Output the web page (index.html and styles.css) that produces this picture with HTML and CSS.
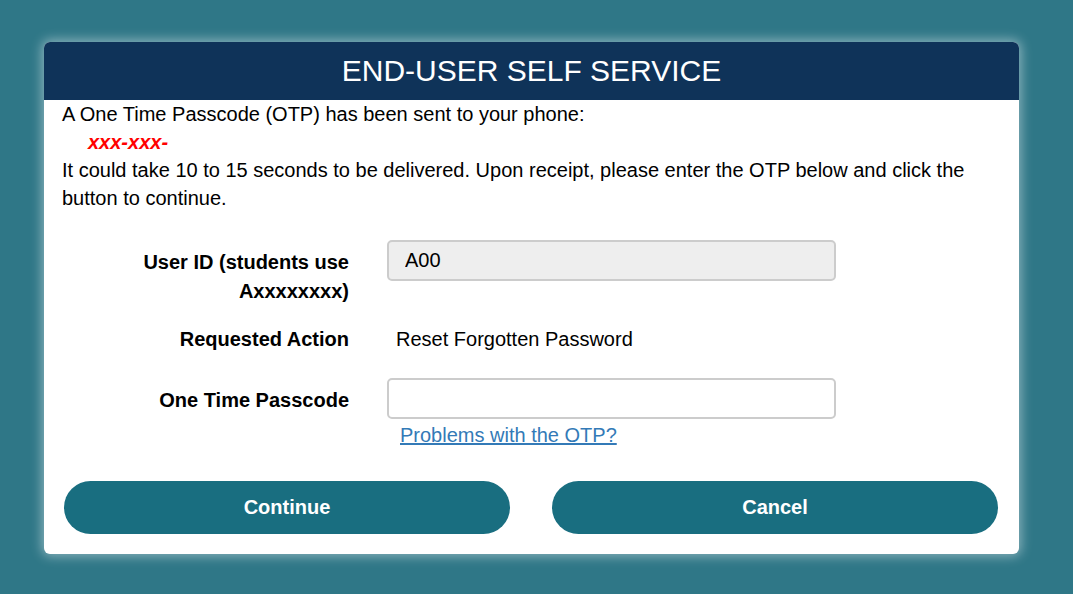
FILE: index.html
```html
<!DOCTYPE html>
<html>
<head>
<meta charset="utf-8">
<link rel="stylesheet" href="styles.css">
</head>
<body>
<div class="page">
  <div class="card">
    <div class="card-header">END-USER SELF SERVICE</div>
    <div class="card-body">
      <p class="msg">A One Time Passcode (OTP) has been sent to your phone:</p>
      <p class="phone">xxx-xxx-</p>
      <p class="msg">It could take 10 to 15 seconds to be delivered. Upon receipt, please enter the OTP below and click the button to continue.</p>
      <div class="form">
        <div class="row">
          <div class="label">User ID (students use Axxxxxxxx)</div>
          <div class="field"><input class="input readonly" type="text" value="A00" readonly></div>
        </div>
        <div class="row row-action">
          <div class="label">Requested Action</div>
          <div class="field value">Reset Forgotten Password</div>
        </div>
        <div class="row row-otp">
          <div class="label">One Time Passcode</div>
          <div class="field">
            <input class="input" type="text">
            <a class="link" href="#">Problems with the OTP?</a>
          </div>
        </div>
      </div>
      <div class="buttons">
        <button class="btn">Continue</button>
        <button class="btn">Cancel</button>
      </div>
    </div>
  </div>
</div>
</body>
</html>
```
FILE: styles.css
```css
html, body {
  margin: 0;
  padding: 0;
  height: 100%;
}
body {
  background: #2f7787;
  font-family: "Liberation Sans", Arial, sans-serif;
  color: #000;
}
.page {
  padding: 42px 54px 0 44px;
}
.card {
  width: 975px;
  background: #fff;
  border-radius: 6px;
  box-shadow: 0 0 12px 2px rgba(255,255,255,0.45);
  overflow: hidden;
}
.card-header {
  background: #0f3359;
  color: #fff;
  height: 58px;
  line-height: 58px;
  text-align: center;
  font-size: 30px;
}
.card-body {
  padding: 0 18px 20px 18px;
}
.msg {
  margin: 0;
  font-size: 20px;
  line-height: 28px;
}
.phone {
  margin: 0;
  padding-left: 26px;
  font-size: 20px;
  line-height: 28px;
  color: #f00;
  font-weight: bold;
  font-style: italic;
}
.form {
  margin-top: 28px;
}
.row {
  display: grid;
  grid-template-columns: 287px 448px;
  column-gap: 38px;
  align-items: start;
}
.label {
  text-align: right;
  font-weight: bold;
  font-size: 20px;
  line-height: 29px;
  padding-left: 60px;
  padding-top: 8px;
}
.input {
  display: block;
  box-sizing: border-box;
  width: 449px;
  height: 41px;
  border: 2px solid #ccc;
  border-radius: 5px;
  background: #fff;
  font-family: "Liberation Sans", Arial, sans-serif;
  font-size: 20px;
  padding: 0 16px;
  color: #000;
  outline: none;
}
.input.readonly {
  background: #eee;
}
.row-action {
  margin-top: 11px;
}
.row-action .value {
  font-size: 20px;
  line-height: 29px;
  padding-top: 8px;
  padding-left: 9px;
}
.row-otp {
  margin-top: 24px;
}
.link {
  display: inline-block;
  margin-top: 3px;
  margin-left: 13px;
  color: #337ab7;
  font-size: 20px;
  line-height: 26px;
}
.buttons {
  display: flex;
  gap: 42px;
  margin-top: 33px;
  padding: 0 2px;
}
.btn {
  width: 446px;
  height: 53px;
  border: none;
  border-radius: 27px;
  background: #196e80;
  color: #fff;
  font-family: "Liberation Sans", Arial, sans-serif;
  font-weight: bold;
  font-size: 20px;
}
```
